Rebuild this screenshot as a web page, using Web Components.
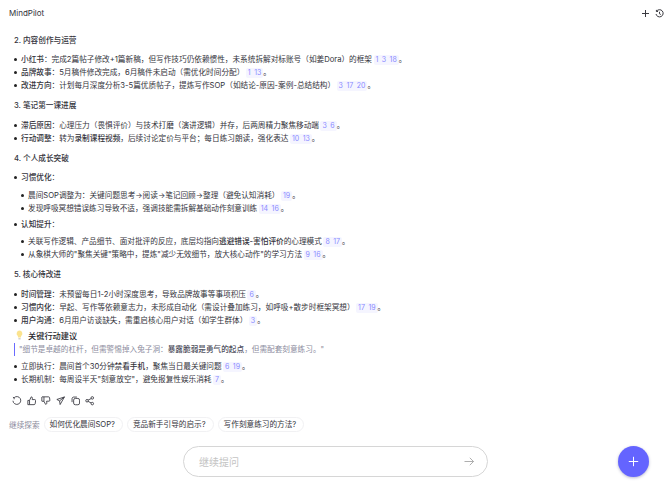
<!DOCTYPE html>
<html lang="zh">
<head>
<meta charset="utf-8">
<title>MindPilot</title>
<style>
  html, body { margin: 0; height: 100%; background: #fff; }
  body {
    font-family: "Inter", "Noto Sans CJK SC", sans-serif;
    font-size: 7.65px;
    color: #33333b;
  }
</style>
</head>
<body>
<mind-pilot>
  <top-bar slot="top">MindPilot</top-bar>

  <sec-title>2. 内容创作与运营</sec-title>
  <bullet-item><b>小红书</b>：完成2篇帖子修改+1篇新稿，但写作技巧仍依赖惯性，未系统拆解对标账号（如姜Dora）的框架<cite-tag>1 3 18</cite-tag>。</bullet-item>
  <bullet-item><b>品牌故事</b>：5月稿件修改完成，6月稿件未启动（需优化时间分配）<cite-tag>1 13</cite-tag>。</bullet-item>
  <bullet-item><b>改进方向</b>：计划每月深度分析3-5篇优质帖子，提炼写作SOP（如结论-原因-案例-总结结构）<cite-tag>3 17 20</cite-tag>。</bullet-item>

  <sec-title>3. 笔记第一课进展</sec-title>
  <bullet-item><b>滞后原因</b>：心理压力（畏惧评价）与技术打磨（演讲逻辑）并存，后两周精力聚焦移动端<cite-tag>3 6</cite-tag>。</bullet-item>
  <bullet-item><b>行动调整</b>：转为<b>录制课程视频</b>，后续讨论定价与平台；每日练习朗读，强化表达<cite-tag>10 13</cite-tag>。</bullet-item>

  <sec-title>4. 个人成长突破</sec-title>
  <bullet-item><b>习惯优化</b>：</bullet-item>
  <bullet-item sub first>晨间SOP调整为：关键问题思考→阅读→笔记回顾→整理（避免认知消耗）<cite-tag>19</cite-tag>。</bullet-item>
  <bullet-item sub>发现呼吸冥想错误练习导致不适，强调技能需拆解基础动作刻意训练<cite-tag>14 16</cite-tag>。</bullet-item>
  <bullet-item gap><b>认知提升</b>：</bullet-item>
  <bullet-item sub first>关联写作逻辑、产品细节、面对批评的反应，底层均指向<b>逃避错误-害怕评价</b>的心理模式<cite-tag>8 17</cite-tag>。</bullet-item>
  <bullet-item sub>从象棋大师的"聚焦关键"策略中，提炼"减少无效细节，放大核心动作"的学习方法<cite-tag>9 16</cite-tag>。</bullet-item>

  <sec-title>5. 核心待改进</sec-title>
  <bullet-item><b>时间管理</b>：未预留每日1-2小时深度思考，导致品牌故事等事项积压<cite-tag>6</cite-tag>。</bullet-item>
  <bullet-item><b>习惯内化</b>：早起、写作等依赖意志力，未形成自动化（需设计叠加练习，如呼吸+散步时框架冥想）<cite-tag>17 19</cite-tag>。</bullet-item>
  <bullet-item><b>用户沟通</b>：6月用户访谈缺失，需重启核心用户对话（如学生群体）<cite-tag>3</cite-tag>。</bullet-item>

  <tip-title>关键行动建议</tip-title>
  <quote-line>"细节是卓越的杠杆，但需警惕掉入兔子洞：<b>暴露脆弱是勇气的起点</b>，但需配套刻意练习。"</quote-line>
  <bullet-item>立即执行：晨间首个30分钟<b>禁看手机</b>，聚焦当日最关键问题<cite-tag>6 19</cite-tag>。</bullet-item>
  <bullet-item>长期机制：每周设半天"刻意放空"，避免报复性娱乐消耗<cite-tag>7</cite-tag>。</bullet-item>

  <action-icons></action-icons>
  <explore-row>
    <chip-btn>如何优化晨间SOP?</chip-btn>
    <chip-btn>竞品新手引导的启示?</chip-btn>
    <chip-btn>写作刻意练习的方法?</chip-btn>
  </explore-row>

  <ask-bar slot="bottom">继续提问</ask-bar>
</mind-pilot>

<script>
class MindPilot extends HTMLElement {
  constructor() {
    super();
    this.attachShadow({mode: 'open'}).innerHTML = `
      <style>
        :host { display: flex; flex-direction: column; height: 500px; overflow: hidden; }
        .content { flex: 1; padding: 5.5px 14px 0; }
      </style>
      <slot name="top"></slot>
      <div class="content"><slot></slot></div>
      <slot name="bottom"></slot>`;
  }
}

class TopBar extends HTMLElement {
  constructor() {
    super();
    this.attachShadow({mode: 'open'}).innerHTML = `
      <style>
        :host { display: flex; align-items: center; justify-content: space-between;
          height: 26px; margin-bottom: -5px; padding: 0 4.5px 0 9px; font-size: 8px; color: #33333b; }
        .icons { display: flex; gap: 5px; }
        svg { width: 9px; height: 9px; fill: none; stroke: #3a3a40; stroke-width: 1; display: block; }
      </style>
      <span><slot></slot></span>
      <div class="icons">
        <svg viewBox="0 0 9 9"><path d="M4.5 1v7M1 4.5h7"/></svg>
        <svg viewBox="0 0 9 9"><path d="M1.6 2.2A3.6 3.6 0 1 1 1 5M1.4 .9v1.6H3M4.5 2.8v2l1.3.7"/></svg>
      </div>`;
  }
}

class SecTitle extends HTMLElement {
  constructor() {
    super();
    this.attachShadow({mode: 'open'}).innerHTML = `
      <style>
        :host { display: block; line-height: 13px; font-weight: 500; color: #33333b; margin: 7px 0 6.5px; }
      </style>
      <slot></slot>`;
  }
}

class BulletItem extends HTMLElement {
  constructor() {
    super();
    this.attachShadow({mode: 'open'}).innerHTML = `
      <style>
        :host { display: block; position: relative; line-height: 13px; padding-left: 7px; white-space: nowrap; }
        :host([sub]) { margin-left: 7px; }
        :host([first]) { margin-top: 4.5px; }
        :host([gap]) { margin-top: 3.3px; }
        i { position: absolute; left: 0; top: 5px; width: 3px; height: 3px; border-radius: 50%; background: #222; }
        ::slotted(b) { font-weight: 500; }
      </style>
      <i></i><slot></slot>`;
  }
}

class CiteTag extends HTMLElement {
  constructor() {
    super();
    this.attachShadow({mode: 'open'}).innerHTML = `
      <style>
        :host { display: inline-block; line-height: 10px; padding: 0 2px; margin-left: 1.5px; border-radius: 2px;
          background: #f5f5ff; color: #8a8aff; font-size: 7px; word-spacing: 1.5px; }
      </style>
      <slot></slot>`;
  }
}

class TipTitle extends HTMLElement {
  constructor() {
    super();
    this.attachShadow({mode: 'open'}).innerHTML = `
      <style>
        :host { display: flex; align-items: center; gap: 4px; height: 13px; margin: 2.2px 0 1px 1px;
          font-size: 8.2px; font-weight: 500; color: #26262c; }
        svg { width: 9px; height: 10px; display: block; }
      </style>
      <svg viewBox="0 0 9 10">
        <path d="M4.5 .6a3 3 0 0 0-1.7 5.4l.3 1.4h2.8l.3-1.4A3 3 0 0 0 4.5 .6z" fill="#fbe38e"/>
        <path d="M3.4 8.2h2.2v1.2H3.4z" fill="#c9c6bd"/>
      </svg>
      <slot></slot>`;
  }
}

class QuoteLine extends HTMLElement {
  constructor() {
    super();
    this.attachShadow({mode: 'open'}).innerHTML = `
      <style>
        :host { display: block; border-left: 1.5px solid #6a6aff; padding-left: 4px; margin: 1px 0 3.7px 0;
          line-height: 13px; color: #8c8c9e; white-space: nowrap; }
        ::slotted(b) { font-weight: 500; color: #4e4e5c; }
      </style>
      <slot></slot>`;
  }
}

class ActionIcons extends HTMLElement {
  constructor() {
    super();
    this.attachShadow({mode: 'open'}).innerHTML = `
      <style>
        :host { display: flex; gap: 5.2px; margin: 10.5px 0 0 -2px; height: 10px; }
        svg { width: 9.5px; height: 9.5px; fill: none; stroke: #33333b; stroke-width: .8; display: block; }
      </style>
      <svg viewBox="0 0 9 9"><path d="M2 1.6A3.7 3.7 0 1 1 .9 4.5M.9 1.1l1.1.7v1.3"/></svg>
      <svg viewBox="0 0 9 9"><path d="M.8 4.2h1.6v4H.8zM2.4 4.2 4 .8c.8 0 1.2.6 1.1 1.3l-.2 1.3h2.5c.6 0 .9.5.8 1L7.7 7.4c-.1.5-.5.8-1 .8H2.4"/></svg>
      <svg viewBox="0 0 9 9"><path d="M1 .8h6.2c.5 0 .8.3.9.8l.3 2.4c.1.5-.2.9-.8.9H5.3l.2 1.6c.1.8-.4 1.4-1.2 1.4L2.8 5H1c-.2 0-.2-.1-.2-.3V1c0-.1.1-.2.2-.2zM2.8 .8V5"/></svg>
      <svg viewBox="0 0 9 9"><path d="M8 .9 .8 3.3l2.6 1.3.5 3.5zM3.4 4.6 8 .9"/></svg>
      <svg viewBox="0 0 9 9"><rect x="2.5" y="2.3" width="5.6" height="6" rx="1.6"/><path d="M1 5.8V2.6C1 1.6 1.6 1 2.6 1h3"/></svg>
      <svg viewBox="0 0 9 9"><circle cx="6.9" cy="1.8" r="1.2"/><circle cx="6.9" cy="7.2" r="1.2"/><circle cx="1.9" cy="4.5" r="1.2"/><path d="M2.9 3.9 5.9 2.4M2.9 5.1l3 1.5"/></svg>`;
  }
}

class ExploreRow extends HTMLElement {
  constructor() {
    super();
    this.attachShadow({mode: 'open'}).innerHTML = `
      <style>
        :host { display: flex; align-items: center; gap: 4px; margin: 11px 0 0 -5px; }
        span { color: #8a8a9c; }
      </style>
      <span>继续探索</span><slot></slot>`;
  }
}

class ChipBtn extends HTMLElement {
  constructor() {
    super();
    this.attachShadow({mode: 'open'}).innerHTML = `
      <style>
        :host { display: block; height: 15px; line-height: 13px; padding: 0 7px 0 5px; box-sizing: border-box;
          border: 1px solid #f1f1f3; border-radius: 8px; color: #33333b; white-space: nowrap; }
      </style>
      <slot></slot>`;
  }
}

class AskBar extends HTMLElement {
  constructor() {
    super();
    this.attachShadow({mode: 'open'}).innerHTML = `
      <style>
        :host { display: grid; grid-template-columns: 183px 305px 1fr; align-items: center; height: 31px; margin-bottom: 23px; }
        .box { grid-column: 2; height: 31px; box-sizing: border-box; display: flex; align-items: center;
          justify-content: space-between; padding: 0 13px 0 15px; border: 1px solid #d6d6d6; border-radius: 16px;
          font-size: 10px; color: #c4c4c4; }
        .box svg { width: 10px; height: 9px; fill: none; stroke: #9a9a9a; stroke-width: .8; }
        .fab { justify-self: end; margin-right: 19px; width: 31px; height: 31px; border-radius: 50%;
          background: #6464ff; box-shadow: 0 1px 3px rgba(60,60,120,.35);
          display: flex; align-items: center; justify-content: center; }
        .fab svg { width: 11px; height: 11px; fill: none; stroke: #fff; stroke-width: 1; }
      </style>
      <div class="box"><slot></slot>
        <svg viewBox="0 0 10 9"><path d="M.5 4.5h9M5.8 .8l3.7 3.7-3.7 3.7"/></svg>
      </div>
      <div class="fab"><svg viewBox="0 0 11 11"><path d="M5.5 .8v9.4M.8 5.5h9.4"/></svg></div>`;
  }
}

customElements.define('mind-pilot', MindPilot);
customElements.define('top-bar', TopBar);
customElements.define('sec-title', SecTitle);
customElements.define('bullet-item', BulletItem);
customElements.define('cite-tag', CiteTag);
customElements.define('tip-title', TipTitle);
customElements.define('quote-line', QuoteLine);
customElements.define('action-icons', ActionIcons);
customElements.define('explore-row', ExploreRow);
customElements.define('chip-btn', ChipBtn);
customElements.define('ask-bar', AskBar);
</script>
</body>
</html>
